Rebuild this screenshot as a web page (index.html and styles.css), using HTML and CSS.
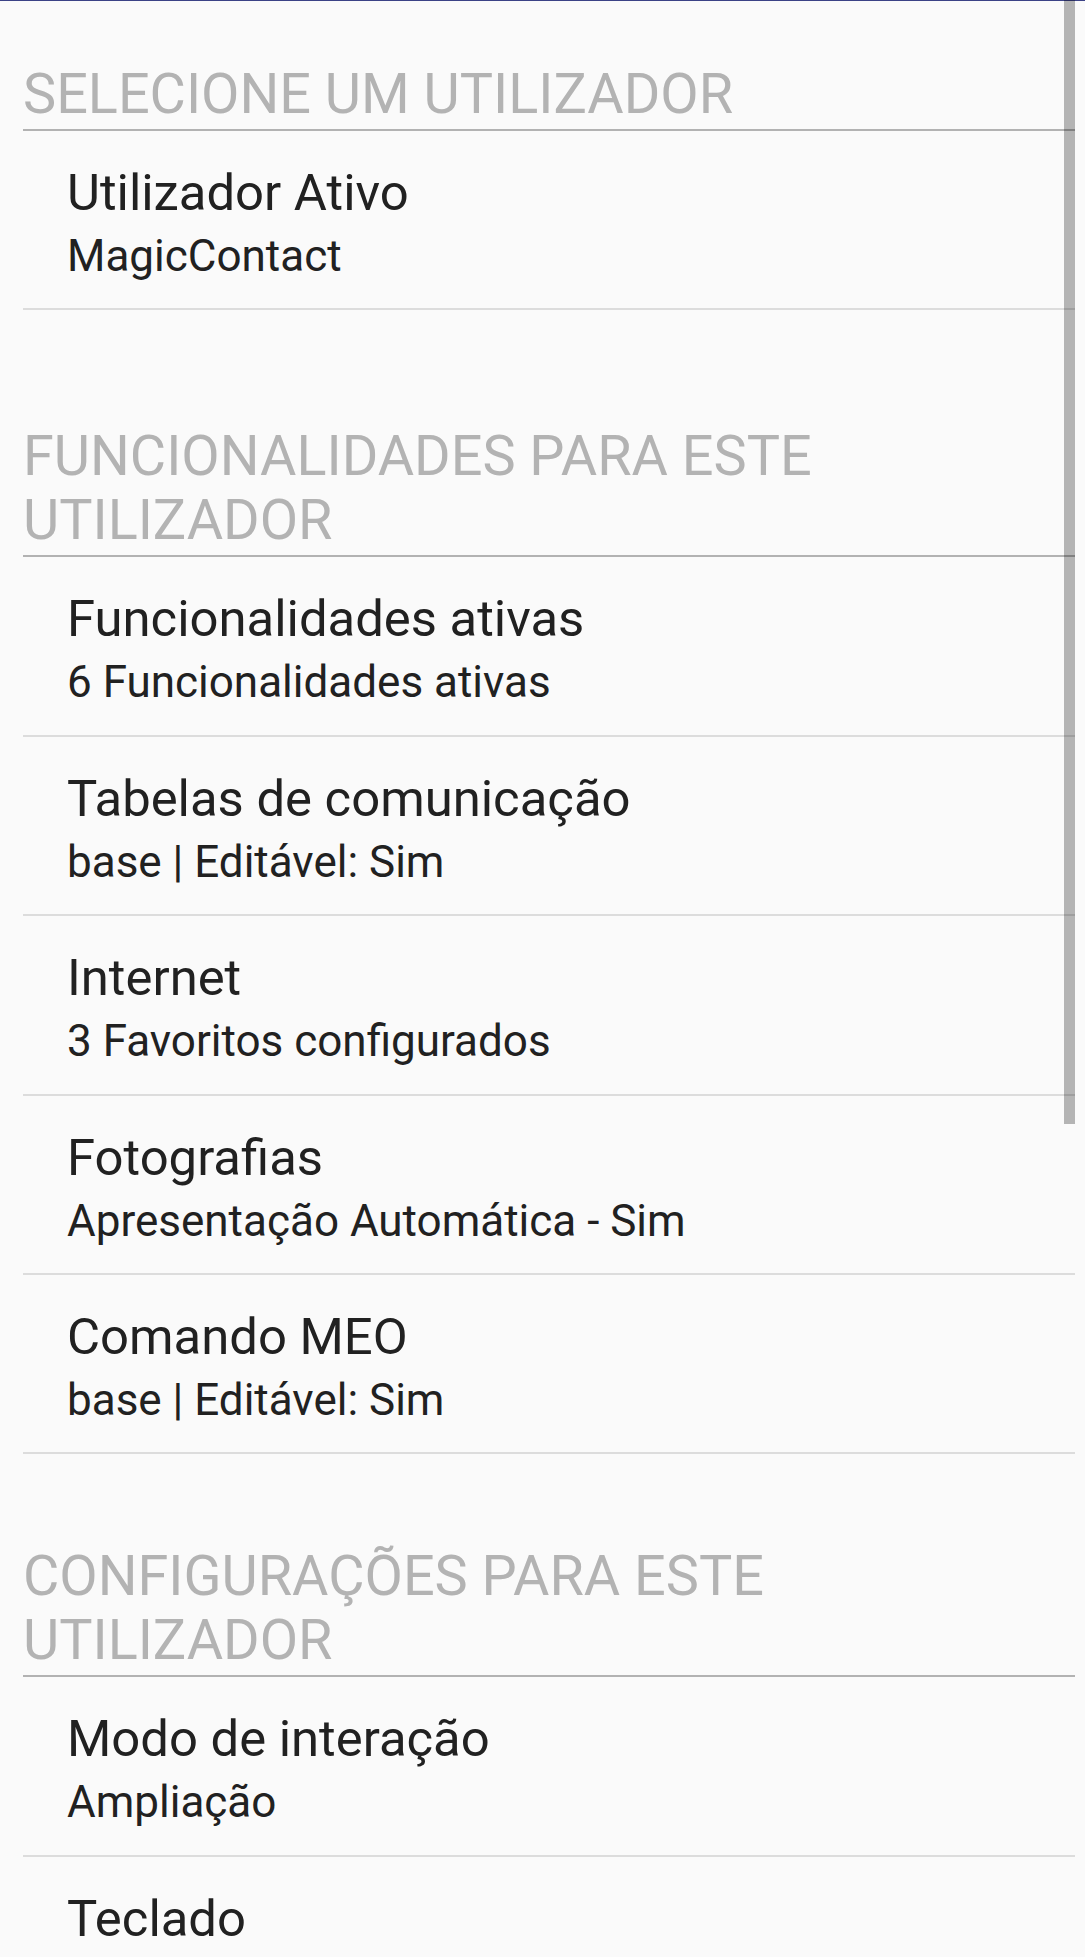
FILE: index.html
```html
<!DOCTYPE html>
<html lang="pt">
<head>
    <meta charset="UTF-8">
    <meta name="viewport" content="width=device-width, initial-scale=1.0">
    <title>Definições do utilizador</title>
    <link rel="stylesheet" href="styles.css">
</head>
<body>
    <div class="top-bar"></div>
    <div class="prefs">
        <section class="category">
            <h2 class="category-title">Selecione um utilizador</h2>
            <div class="pref">
                <div class="pref-title">Utilizador Ativo</div>
                <div class="pref-summary">MagicContact</div>
            </div>
        </section>

        <section class="category category-wide">
            <h2 class="category-title">Funcionalidades para este utilizador</h2>
            <div class="pref">
                <div class="pref-title">Funcionalidades ativas</div>
                <div class="pref-summary">6 Funcionalidades ativas</div>
            </div>
            <div class="pref">
                <div class="pref-title">Tabelas de comunicação</div>
                <div class="pref-summary">base | Editável: Sim</div>
            </div>
            <div class="pref">
                <div class="pref-title">Internet</div>
                <div class="pref-summary">3 Favoritos configurados</div>
            </div>
            <div class="pref">
                <div class="pref-title">Fotografias</div>
                <div class="pref-summary">Apresentação Automática - Sim</div>
            </div>
            <div class="pref">
                <div class="pref-title">Comando MEO</div>
                <div class="pref-summary">base | Editável: Sim</div>
            </div>
        </section>

        <section class="category category-next">
            <h2 class="category-title">Configurações para este utilizador</h2>
            <div class="pref">
                <div class="pref-title">Modo de interação</div>
                <div class="pref-summary">Ampliação</div>
            </div>
            <div class="pref">
                <div class="pref-title">Teclado</div>
            </div>
        </section>
    </div>
    <div class="scrollbar"></div>
</body>
</html>
```

FILE: styles.css
```css
html, body {
    height: 100%;
    overflow: hidden;
}
body {
    font-family: 'Roboto', 'Liberation Sans', sans-serif;
    background-color: #fafafa;
    margin: 0;
    padding: 0;
    position: relative;
}
.top-bar {
    height: 1px;
    background-color: #3b4286;
}
.prefs {
    margin-left: 23px;
    width: 1052px;
}
.category-title {
    margin: 0;
    padding: 61px 30px 3px 0;
    font-size: 55.8px;
    font-weight: 400;
    line-height: 64px;
    text-transform: uppercase;
    color: #b3b3b3;
    border-bottom: 2px solid #b2b2b2;
}
.category-wide .category-title {
    padding-top: 114px;
}
.category-next .category-title {
    padding-top: 90px;
}
.pref {
    box-sizing: border-box;
    height: 179.4px;
    padding: 30px 0 0 44px;
    border-bottom: 2px solid #dcdcdc;
    color: #212121;
}
.pref-title {
    font-size: 50.8px;
    line-height: 64px;
}
.pref-summary {
    font-size: 44px;
    line-height: 62px;
}
.scrollbar {
    position: absolute;
    top: 0;
    left: 1064px;
    width: 11px;
    height: 1124px;
    background-color: rgba(0, 0, 0, 0.28);
}
```
